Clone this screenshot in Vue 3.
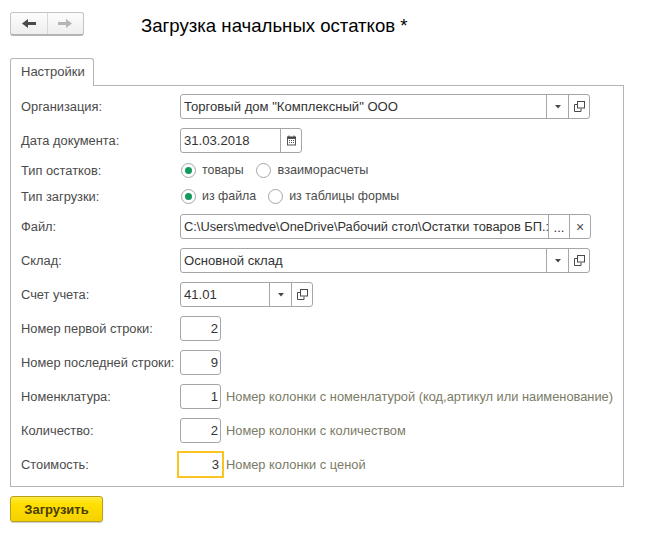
<script setup>
const arrowIcon = 'M0 0H6L3 3.5Z'
</script>

<template>
  <div class="page">
    <header class="top">
      <div class="nav">
        <button class="nav-btn">
          <svg width="14" height="11" viewBox="0 0 14 11"><path d="M0 5.5 6 1V4H14V7H6V10Z" fill="#4a4a4a" /></svg>
        </button>
        <button class="nav-btn">
          <svg width="14" height="11" viewBox="0 0 14 11"><path d="M14 5.5 8 1V4H0V7H8V10Z" fill="#b5b5b5" /></svg>
        </button>
      </div>
      <h1 class="title">Загрузка начальных остатков *</h1>
    </header>

    <div class="tab">Настройки</div>
    <section class="panel">
      <div class="row h25">
        <label>Организация:</label>
        <div class="field w410">
          <span class="val grow">Торговый дом "Комплексный" ООО</span>
          <span class="cell"><svg width="6" height="4" viewBox="0 0 6 4"><path :d="arrowIcon" fill="#4a4a4a" /></svg></span>
          <span class="cell last">
            <svg width="11" height="11" viewBox="0 0 11 11" fill="none" stroke="#4a4a4a"><rect x="3.5" y="0.5" width="7" height="6.5" /><path d="M3 3.500H0.5V10.500H7V7.500" /></svg>
          </span>
        </div>
      </div>
      <div class="row h25 mt9">
        <label>Дата документа:</label>
        <div class="field w122">
          <span class="val grow">31.03.2018</span>
          <span class="cell last">
            <svg width="11" height="11" viewBox="0 0 11 11">
              <rect x="1" y="1.500" width="9" height="2.500" fill="#444" />
              <path d="M3 0.500V2M8 0.500V2" stroke="#444" fill="none" />
              <rect x="1.500" y="3.500" width="8" height="6.500" fill="none" stroke="#555" />
              <path d="M3 5.500H8M3 7.500H8" stroke="#555" stroke-dasharray="1 1" fill="none" />
            </svg>
          </span>
        </div>
      </div>
      <div class="row h18 mt8">
        <label>Тип остатков:</label>
        <div class="radios">
          <span class="radio on"></span><span class="rl gap1">товары</span>
          <span class="radio"></span><span class="rl wide">взаиморасчеты</span>
        </div>
      </div>
      <div class="row h18 mt8">
        <label>Тип загрузки:</label>
        <div class="radios">
          <span class="radio on"></span><span class="rl gap1">из файла</span>
          <span class="radio"></span><span class="rl">из таблицы формы</span>
        </div>
      </div>
      <div class="row h25 mt9">
        <label>Файл:</label>
        <div class="field w411">
          <span class="val grow clip file">C:\Users\medve\OneDrive\Рабочий стол\Остатки товаров БП.:</span>
          <span class="cell dots">...</span>
          <span class="cell last x">×</span>
        </div>
      </div>
      <div class="row h25 mt9">
        <label>Склад:</label>
        <div class="field w410">
          <span class="val grow">Основной склад</span>
          <span class="cell"><svg width="6" height="4" viewBox="0 0 6 4"><path :d="arrowIcon" fill="#4a4a4a" /></svg></span>
          <span class="cell last">
            <svg width="11" height="11" viewBox="0 0 11 11" fill="none" stroke="#4a4a4a"><rect x="3.5" y="0.5" width="7" height="6.5" /><path d="M3 3.500H0.5V10.500H7V7.500" /></svg>
          </span>
        </div>
      </div>
      <div class="row h25 mt9">
        <label>Счет учета:</label>
        <div class="field w133">
          <span class="val grow">41.01</span>
          <span class="cell"><svg width="6" height="4" viewBox="0 0 6 4"><path :d="arrowIcon" fill="#4a4a4a" /></svg></span>
          <span class="cell last">
            <svg width="11" height="11" viewBox="0 0 11 11" fill="none" stroke="#4a4a4a"><rect x="3.5" y="0.5" width="7" height="6.5" /><path d="M3 3.500H0.5V10.500H7V7.500" /></svg>
          </span>
        </div>
      </div>
      <div class="row h25 mt9">
        <label>Номер первой строки:</label>
        <div class="field num">2</div>
      </div>
      <div class="row h25 mt9">
        <label>Номер последней строки:</label>
        <div class="field num">9</div>
      </div>
      <div class="row h25 mt9">
        <label>Номенклатура:</label>
        <div class="field num">1</div>
        <span class="hint">Номер колонки с номенлатурой (код,артикул или наименование)</span>
      </div>
      <div class="row h25 mt9">
        <label>Количество:</label>
        <div class="field num">2</div>
        <span class="hint">Номер колонки с количеством</span>
      </div>
      <div class="row h25 mt9">
        <label>Стоимость:</label>
        <div class="field num focus">3</div>
        <span class="hint">Номер колонки с ценой</span>
      </div>
    </section>

    <button class="load">Загрузить</button>
  </div>
</template>

<style scoped>
.page {
  width: 667px;
  height: 549px;
  box-sizing: border-box;
  padding: 12px 0 0 10px;
  background: #fff;
  font-family: "Liberation Sans", Arial, sans-serif;
  font-size: 12px;
  color: #4b4b4b;
  overflow: hidden;
}
.top {
  display: flex;
  align-items: flex-start;
  height: 25px;
}
.nav {
  display: flex;
  width: 74px;
  height: 24px;
  box-sizing: border-box;
  border: 1px solid #c4c4c4;
  border-bottom: 2px solid #b4b4b4;
  border-radius: 3px;
  background: linear-gradient(#fdfdfd, #eeeeee);
}
.nav-btn {
  flex: 1;
  display: flex;
  align-items: center;
  justify-content: center;
  padding: 0;
  border: 0;
  background: none;
}
.nav-btn + .nav-btn {
  border-left: 1px solid #d8d8d8;
}
.title {
  margin: 3px 0 0 57px;
  font-size: 18.6px;
  line-height: 22px;
  font-weight: 400;
  color: #000;
  white-space: nowrap;
}
.tab {
  width: 84px;
  height: 28px;
  box-sizing: border-box;
  margin-top: 21px;
  padding-left: 10px;
  line-height: 26px;
  font-size: 13px;
  border: 1px solid #b4b4b4;
  border-bottom: 0;
  border-radius: 3px 3px 0 0;
  background: #fff;
  position: relative;
  z-index: 1;
}
.panel {
  width: 614px;
  height: 402px;
  margin-top: -1px;
  box-sizing: border-box;
  padding: 8px 0 0 10px;
  border: 1px solid #b4b4b4;
}
.row {
  display: flex;
  align-items: center;
}
.h25 { height: 25px; }
.h18 { height: 18px; }
.mt9 { margin-top: 9px; }
.mt8 { margin-top: 8px; }
label {
  flex: 0 0 159px;
  font-size: 12.85px;
  white-space: nowrap;
}
.field {
  display: flex;
  align-items: stretch;
  height: 25px;
  box-sizing: border-box;
  border: 1px solid #a6a6a6;
  border-radius: 3px;
  background: #fff;
  color: #333;
  font-size: 13.1px;
}
.w410 { width: 410px; }
.w411 { width: 411px; }
.w122 { width: 122px; }
.w133 { width: 133px; }
.val {
  display: flex;
  align-items: center;
  padding-left: 3px;
  white-space: nowrap;
}
.grow { flex: 1; min-width: 0; }
.clip { overflow: hidden; }
.file { font-size: 12.85px; }
.cell {
  flex: 0 0 21px;
  display: flex;
  align-items: center;
  justify-content: center;
  border-left: 1px solid #a6a6a6;
}
.last { flex-basis: 20px; }
.dots { align-items: flex-end; padding-bottom: 3px; box-sizing: border-box; }
.x { font-size: 14px; color: #4a4a4a; }
.num {
  width: 41px;
  justify-content: flex-end;
  align-items: center;
  padding-right: 2px;
}
.focus {
  width: 47px;
  height: 27px;
  margin-left: -3px;
  margin-right: -3px;
  border: 2px solid #f9c41f;
  border-radius: 0;
  padding-right: 3px;
}
.hint {
  margin-left: 5px;
  font-size: 12.83px;
  color: #7b7b66;
  white-space: nowrap;
}
.radios {
  display: flex;
  align-items: center;
}
.radio {
  width: 15px;
  height: 15px;
  box-sizing: border-box;
  border: 1px solid #a6a6a6;
  border-radius: 50%;
  display: flex;
  align-items: center;
  justify-content: center;
  margin-left: 1px;
}
.radio.on::after {
  content: "";
  width: 7px;
  height: 7px;
  border-radius: 50%;
  background: #129a5c;
}
.rl {
  margin-left: 6px;
  font-size: 12.4px;
}
.wide {
  font-size: 12.7px;
  margin-left: 7px;
}
.gap1 { margin-right: 11px; }
.load {
  display: block;
  width: 93px;
  height: 26px;
  margin-top: 9px;
  padding: 0;
  box-sizing: border-box;
  border: 1px solid #b89f1c;
  border-radius: 3px;
  background: linear-gradient(#ffe93f, #ffe000 30%, #f5d000);
  color: #4b3d00;
  font-family: inherit;
  font-size: 13px;
  font-weight: 700;
  box-shadow: 0 1px 1px #ccc;
}
</style>
